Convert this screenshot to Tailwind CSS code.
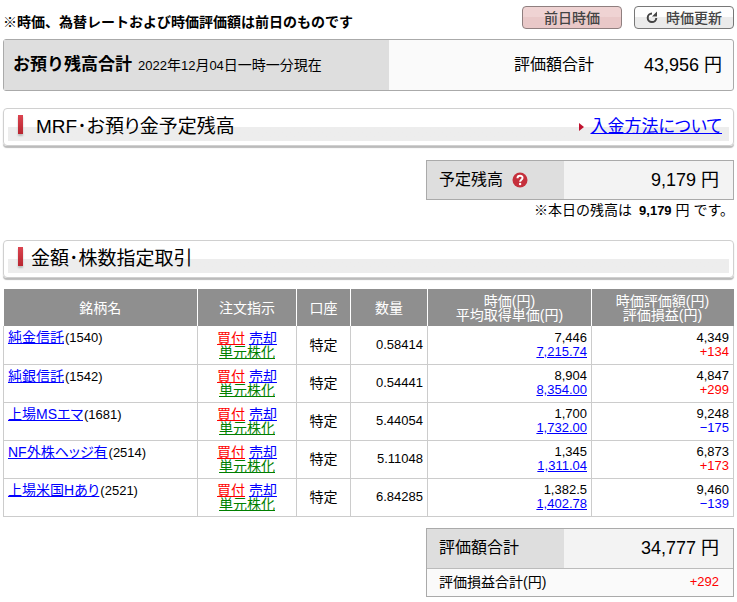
<!DOCTYPE html>
<html lang="ja">
  <head>
    <meta charset="utf-8">
    <meta name="viewport" content="width=device-width, initial-scale=1">
    <title>お預り残高合計</title>
    <script src="https://cdn.jsdelivr.net/npm/@tailwindcss/browser@4"></script>
  </head>
  <body class="bg-white text-black text-sm font-['Liberation_Sans','Noto_Sans_CJK_JP',sans-serif]">
    <main class="px-[3px] pt-[6px] pb-1">

      <!-- notice and price buttons -->
      <div class="flex items-start justify-between">
        <p class="pt-[9px] text-[14px] leading-[14px] font-bold whitespace-nowrap">※時価、為替レートおよび時価評価額は前日のものです</p>
        <div class="flex gap-3">
          <button class="h-[23px] w-[100px] rounded-[4px] border border-[#8f7f7f] bg-linear-to-b from-[#efd3d3] from-50% to-[#e9c8c8] to-50% text-[14px] leading-[14px] font-medium text-[#444]">前日時価</button>
          <button class="flex h-[23px] w-[100px] items-center justify-center gap-2 rounded-[4px] border border-[#777] bg-linear-to-b from-[#fdfdfd] from-50% to-[#ebebeb] to-50% text-[14px] leading-[14px] font-medium text-[#444]">
            <svg width="12" height="13" viewBox="0 0 12 13" fill="none" stroke="#444" stroke-width="2">
              <path d="M6 2.5A4.3 4.3 0 1 0 10.3 7"></path>
              <path d="M11 0.5V5.5H6Z" fill="#444" stroke="none"></path>
            </svg>
            時価更新
          </button>
        </div>
      </div>

      <!-- total -->
      <section class="mt-[10px] flex h-[52px] rounded-[3px] border border-[#aaa] bg-[#fafafa]">
        <div class="flex w-[385px] shrink items-center bg-[#dedede] pl-[9px] whitespace-nowrap">
          <h1 class="text-[17px] leading-5 font-bold">お預り残高合計</h1>
          <p class="ml-[6px] text-[14px] leading-5"><span class="text-[13px]">2022</span>年<span class="text-[13px]">12</span>月<span class="text-[13px]">04</span>日一時一分現在</p>
        </div>
        <div class="flex grow items-center justify-end gap-[50px] pr-[11px] whitespace-nowrap">
          <span class="text-[16px] leading-5">評価額合計</span>
          <span class="text-[18px] leading-5">43,956 円</span>
        </div>
      </section>

      <!-- MRF -->
      <section>
        <div class="mt-[17px] flex h-[38px] items-center justify-between rounded-[4px] border border-[#d0d0d0] bg-linear-to-b from-white from-50% to-[#ededed] to-50% pr-[11px] pl-[14px] shadow-[inset_0_0_0_4px_#fff,0_2px_1px_#bbb]">
          <div class="flex items-center">
            <span class="mb-[5px] h-[19px] w-[5px] bg-linear-to-b from-[#dc4450] to-[#b82530] shadow-[0_2px_2px_#bbb]"></span>
            <h2 class="ml-[13px] text-[19px] leading-5 [font-feature-settings:'palt']">MRF･お預り金予定残高</h2>
          </div>
          <div class="flex items-center gap-[6px]">
            <svg width="5" height="8" viewBox="0 0 5 8"><path d="M0 0L5 4L0 8Z" fill="#c1122f"></path></svg>
            <a href="#" class="text-[17px] leading-5 text-[#00f] underline [font-feature-settings:'palt']">入金方法について</a>
          </div>
        </div>
        <div class="mt-[14px] ml-auto flex h-[40px] w-[308px] border border-[#aaa] bg-[#f3f3f3]">
          <div class="flex w-[137px] items-center gap-[9px] bg-[#dedede] pl-[12px] text-[16px] leading-5">
            予定残高
            <svg width="16" height="16" viewBox="0 0 16 16" fill="none">
              <circle cx="8" cy="8" r="7.5" fill="#c5303c"></circle>
              <path d="M5.5 6.2C5.5 2.9 10.7 3.1 10.5 6C10.4 7.7 8.1 7.8 8.1 9.8" stroke="#fff" stroke-width="2"></path>
              <circle cx="8.1" cy="12" r="1.2" fill="#fff"></circle>
            </svg>
          </div>
          <div class="flex grow items-center justify-end pr-[14px] text-[18px] leading-5">9,179 円</div>
        </div>
        <p class="mt-[3px] text-right text-[14px] leading-[14px] whitespace-nowrap">※本日の残高は&ensp;<b class="text-[13px]">9,179</b> 円 です。</p>
      </section>

      <!-- holdings -->
      <section>
        <div class="mt-[22px] flex h-[38px] items-center rounded-[4px] border border-[#d0d0d0] bg-linear-to-b from-white from-50% to-[#ededed] to-50% pl-[14px] shadow-[inset_0_0_0_4px_#fff,0_2px_1px_#bbb]">
          <span class="mb-[5px] h-[19px] w-[5px] bg-linear-to-b from-[#dc4450] to-[#b82530] shadow-[0_2px_2px_#bbb]"></span>
          <h2 class="ml-[8px] text-[19px] leading-5 [font-feature-settings:'palt']">金額･株数指定取引</h2>
        </div>

        <table class="mt-[11px] w-full table-fixed border-collapse text-[14px] leading-[14px]">
          <colgroup>
            <col>
            <col class="w-[99px]">
            <col class="w-[54px]">
            <col class="w-[77px]">
            <col class="w-[164px]">
            <col class="w-[142px]">
          </colgroup>
          <thead>
            <tr class="h-[37px] bg-[#8f8f8f] text-white *:border-r *:border-white *:p-0 *:font-normal *:last:border-[#8f8f8f]">
              <th>銘柄名</th>
              <th>注文指示</th>
              <th>口座</th>
              <th>数量</th>
              <th>時価(円)<br>平均取得単価(円)</th>
              <th>時価評価額(円)<br>評価損益(円)</th>
            </tr>
          </thead>
          <tbody id="rows"></tbody>
        </table>

        <div class="mt-[11px] ml-auto w-[308px] border border-[#aaa] bg-[#fafafa]">
          <div class="flex h-[40px] border-b border-[#bbb] bg-[#f3f3f3]">
            <div class="flex w-[137px] items-center bg-[#dedede] pl-[12px] text-[16px] leading-5">評価額合計</div>
            <div class="flex grow items-center justify-end pr-[14px] text-[18px] leading-5">34,777 円</div>
          </div>
          <div class="flex h-[27px] items-center justify-between pr-[14px] pl-[12px] text-[14px] leading-[14px]">
            <span>評価損益合計(円)</span>
            <span class="text-[13px] text-[#f00]">+292</span>
          </div>
        </div>
      </section>
    </main>

    <script>
      const stocks = [
        ["純金信託", "1540", "0.58414", "7,446", "7,215.74", "4,349", "+134"],
        ["純銀信託", "1542", "0.54441", "8,904", "8,354.00", "4,847", "+299"],
        ["上場MSエマ", "1681", "5.44054", "1,700", "1,732.00", "9,248", "−175"],
        ["NF外株ヘッジ有", "2514", "5.11048", "1,345", "1,311.04", "6,873", "+173"],
        ["上場米国Hあり", "2521", "6.84285", "1,382.5", "1,402.78", "9,460", "−139"],
      ];
      document.querySelector("#rows").innerHTML = stocks.map(([name, code, qty, price, avg, value, gain]) => `
        <tr class="h-[38px] *:border *:border-t-0 *:border-[#ccc] *:px-[4px] *:py-0">
          <td class="pt-[4px]! align-top"><a href="#" class="text-[#00f] underline [font-feature-settings:'palt']">${name}</a><span class="ml-px text-[13px]">(${code})</span></td>
          <td class="text-center"><a href="#" class="text-[#f00] underline">買付</a> <a href="#" class="text-[#00f] underline">売却</a><br><a href="#" class="text-[green] underline">単元株化</a></td>
          <td class="text-center">特定</td>
          <td class="text-right text-[13px]">${qty}</td>
          <td class="text-right text-[13px]">${price}<br><a href="#" class="text-[#00f] underline">${avg}</a></td>
          <td class="text-right text-[13px]">${value}<br><span class="${gain[0] === "+" ? "text-[#f00]" : "text-[#00f]"}">${gain}</span></td>
        </tr>`).join("");
    </script>
  </body>
</html>
